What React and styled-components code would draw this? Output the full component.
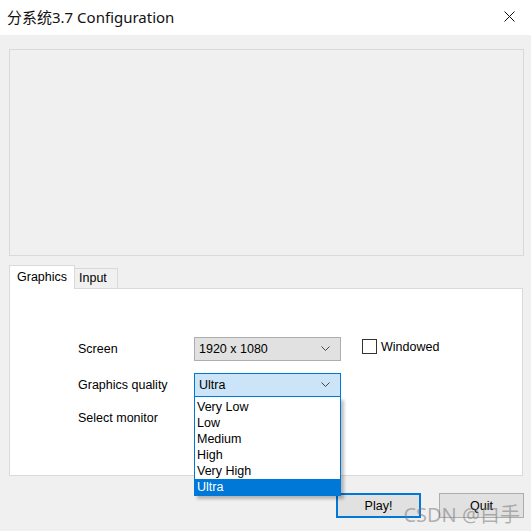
import React from "react";
import styled, { createGlobalStyle } from "styled-components";

// --- Data --- //

const qualities = ["Very Low", "Low", "Medium", "High", "Very High", "Ultra"];

// --- Components --- //

const Chevron = () => (
  <svg width="9" height="6" viewBox="0 0 9 6">
    <polyline points="0.5,0.5 4.5,4.5 8.5,0.5" fill="none" stroke="#444" strokeWidth="1" />
  </svg>
);

const CloseIcon = () => (
  <svg width="11" height="11" viewBox="0 0 11 11">
    <path d="M0.5 0.5 L10.5 10.5 M10.5 0.5 L0.5 10.5" stroke="#111" strokeWidth="1" />
  </svg>
);

const Combo = ({ value, active, children }) => (
  <ComboWrap>
    <ComboBox $active={active}>
      <span>{value}</span>
      <Chevron />
    </ComboBox>
    {children}
  </ComboWrap>
);

export default function App() {
  return (
    <>
      <GlobalStyle />
      <Window>
        <TitleBar>
          <Title>分系统3.7 Configuration</Title>
          <CloseButton>
            <CloseIcon />
          </CloseButton>
        </TitleBar>
        <Body>
          <Preview />
          <TabStrip>
            <Tab $selected>Graphics</Tab>
            <Tab>Input</Tab>
          </TabStrip>
          <TabPanel>
            <FormGrid>
              <Label>Screen</Label>
              <Combo value="1920 x 1080" />
              <CheckRow>
                <CheckBox />
                <span>Windowed</span>
              </CheckRow>

              <Label>Graphics quality</Label>
              <Combo value="Ultra" active>
                <DropList>
                  {qualities.map((q) => (
                    <DropItem key={q} $selected={q === "Ultra"}>
                      {q}
                    </DropItem>
                  ))}
                </DropList>
              </Combo>
              <span />

              <Label $shift={-3}>Select monitor</Label>
              <span />
              <span />
            </FormGrid>
          </TabPanel>
          <ButtonRow>
            <Button $default>Play!</Button>
            <Button>Quit</Button>
          </ButtonRow>
          <Watermark>CSDN @白手</Watermark>
        </Body>
      </Window>
    </>
  );
}

// --- Styles --- //

const GlobalStyle = createGlobalStyle`
  html, body {
    margin: 0;
    padding: 0;
    background: #f0f0f0;
  }
  * {
    box-sizing: border-box;
  }
`;

const Window = styled.div`
  width: 531px;
  height: 531px;
  display: flex;
  flex-direction: column;
  font-family: "Liberation Sans", "Noto Sans CJK SC", sans-serif;
  font-size: 12.5px;
  color: #000;
  overflow: hidden;
`;

const TitleBar = styled.div`
  height: 35px;
  background: #fff;
  display: flex;
  align-items: center;
  justify-content: space-between;
  padding: 0 16px 3px 7px;
`;

const Title = styled.div`
  font-family: "Noto Sans", "Noto Sans CJK SC", sans-serif;
  font-size: 15px;
  color: #111;
`;

const CloseButton = styled.div`
  display: flex;
  align-items: center;
`;

const Body = styled.div`
  position: relative;
  flex: 1;
  background: #f0f0f0;
  padding: 14px 7px 0 9px;
  display: flex;
  flex-direction: column;
`;

const Preview = styled.div`
  height: 207px;
  border: 1px solid #d9d9d9;
`;

const TabStrip = styled.div`
  display: flex;
  align-items: flex-end;
  margin-top: 9px;
  height: 24px;
  position: relative;
  z-index: 1;
  margin-bottom: -1px;
`;

const Tab = styled.div`
  height: ${(p) => (p.$selected ? "24px" : "21px")};
  padding: ${(p) => (p.$selected ? "3px 7px 0 7px" : "1px 10px 0 4px")};
  background: ${(p) => (p.$selected ? "#fff" : "#f0f0f0")};
  border: 1px solid #d9d9d9;
  border-bottom: ${(p) => (p.$selected ? "none" : "1px solid #d9d9d9")};
  ${(p) => !p.$selected && "border-left: none;"}
  line-height: 16px;
`;

const TabPanel = styled.div`
  height: 188px;
  margin-right: 1px;
  background: #fff;
  border: 1px solid #d9d9d9;
  padding: 48px 0 0 68px;
`;

const FormGrid = styled.div`
  display: grid;
  grid-template-columns: 116px 147px auto;
  grid-auto-rows: 24px;
  row-gap: 12px;
  align-items: center;
`;

const Label = styled.span`
  white-space: nowrap;
  margin-top: ${(p) => (p.$shift || 0) * 2}px;
`;

const ComboWrap = styled.div`
  position: relative;
  height: 24px;
`;

const ComboBox = styled.div`
  height: 24px;
  display: flex;
  align-items: center;
  justify-content: space-between;
  padding: 0 10px 0 4px;
  background: ${(p) => (p.$active ? "#cce4f7" : "#e1e1e1")};
  border: 1px solid ${(p) => (p.$active ? "#0078d7" : "#adadad")};
`;

const DropList = styled.div`
  position: absolute;
  top: 24px;
  left: 0;
  width: 147px;
  padding-top: 2px;
  background: #fff;
  border: 1px solid #0078d7;
  border-top: none;
  box-shadow: 3px 3px 3px rgba(0, 0, 0, 0.25);
  z-index: 5;
`;

const DropItem = styled.div`
  height: 16px;
  line-height: 16px;
  padding-left: 2px;
  background: ${(p) => (p.$selected ? "#0078d7" : "transparent")};
  color: ${(p) => (p.$selected ? "#fff" : "#000")};
`;

const CheckRow = styled.div`
  display: flex;
  align-items: center;
  gap: 4px;
  margin: -5px 0 0 21px;
`;

const CheckBox = styled.div`
  width: 15px;
  height: 15px;
  border: 1px solid #333;
  background: #fff;
`;

const ButtonRow = styled.div`
  display: flex;
  justify-content: flex-end;
  gap: 18px;
  margin-top: 17px;
`;

const Button = styled.div`
  width: 85px;
  height: 25px;
  display: flex;
  align-items: center;
  justify-content: center;
  background: #e1e1e1;
  border: ${(p) => (p.$default ? "2px solid #0078d7" : "1px solid #adadad")};
`;

const Watermark = styled.div`
  position: absolute;
  right: 11px;
  bottom: 3px;
  font-family: "Noto Sans", "Noto Sans CJK SC", sans-serif;
  font-size: 20px;
  color: rgba(120, 120, 120, 0.55);
  pointer-events: none;
`;
